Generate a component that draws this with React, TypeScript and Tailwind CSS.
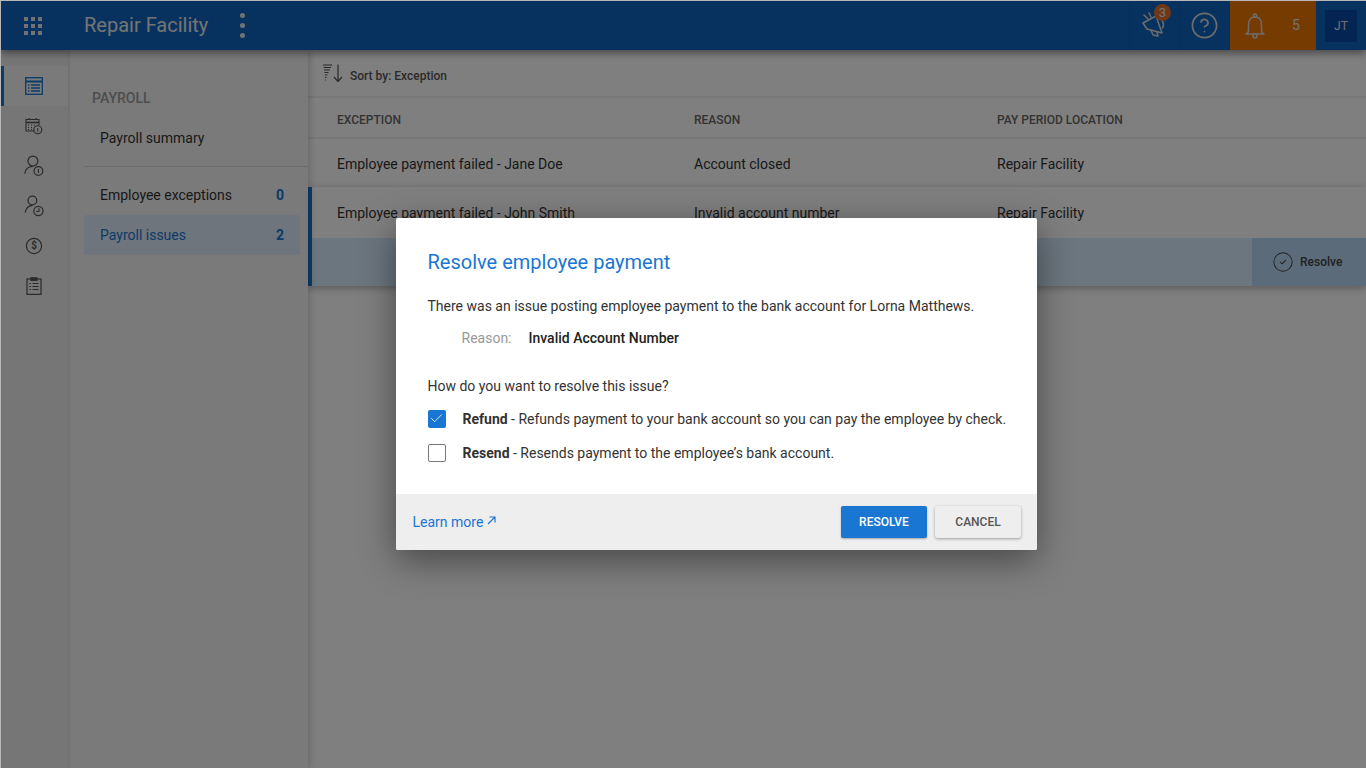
import { Check, CircleCheck, CircleHelp } from 'lucide-react'

const FONT = "font-['Roboto','Liberation_Sans',sans-serif]"

function AppsIcon() {
  const dots = [0, 1, 2, 3, 4, 5, 6, 7, 8]
  return (
    <div className="grid h-[18px] w-[18px] grid-cols-3 gap-[3px]">
      {dots.map((d) => (
        <span key={d} className="h-[4px] w-[4px] bg-[#e4e4e4]" />
      ))}
    </div>
  )
}

function Megaphone() {
  return (
    <svg className="mb-[4px]" width="26" height="28" viewBox="0 0 26 28" fill="none" stroke="#d8d8d8" strokeWidth="1.5" strokeLinejoin="round" strokeLinecap="round">
      <path d="M1 13 L14 6 L20 23 L5 19 Z" />
      <path d="M9 20 L11 25 L16 26 L15 22" />
      <path d="M16 7 C20 8 23 14 20.5 18" />
      <path d="M2 5 L6 9" />
      <path d="M7 3 L9 7" />
    </svg>
  )
}

function BellIcon() {
  return (
    <svg width="20" height="26" viewBox="0 0 20 26" fill="none" stroke="#d8d8d8" strokeWidth="1.5" strokeLinejoin="round">
      <path d="M10 4 C5 4 3.5 8 3.5 12 V17 C3.5 19 2.5 20.5 1 21 H19 C17.5 20.5 16.5 19 16.5 17 V12 C16.5 8 15 4 10 4 Z" />
      <circle cx="10" cy="2.6" r="1.6" />
      <circle cx="10" cy="23" r="2" />
    </svg>
  )
}

function IconList() {
  return (
    <svg width="18" height="18" viewBox="0 0 18 18" fill="none" stroke="#1976d2" strokeWidth="1.3">
      <rect x="0.7" y="0.7" width="16.6" height="16.6" />
      <path d="M0.7 4.5 H17.3" strokeWidth="2" />
      <path d="M3 8 H4.5 M6 8 H15 M3 11 H4.5 M6 11 H15 M3 14 H4.5 M6 14 H15" />
    </svg>
  )
}

function IconCalendarMoney() {
  return (
    <svg width="18" height="18" viewBox="0 0 18 18" fill="none" stroke="#555" strokeWidth="1.1">
      <path d="M9 14 H1 V2.5 H14 V8" />
      <path d="M1 5.5 H14" strokeWidth="1.6" />
      <path d="M4 1 V3 M11 1 V3" />
      <path d="M3 8 H4 M6 8 H7 M9 8 H10 M3 10.5 H4 M6 10.5 H7 M3 12.5 H4 M6 12.5 H7" />
      <circle cx="12.8" cy="12.8" r="4" />
      <path d="M12.8 11 V14.6" strokeWidth="1" />
    </svg>
  )
}

function IconPersonMoney() {
  return (
    <svg width="20" height="22" viewBox="0 0 18 20" fill="none" stroke="#555" strokeWidth="1.1">
      <circle cx="8" cy="5.5" r="4.5" />
      <path d="M0.7 17 C1 13 3.5 10.5 8 10.3" />
      <circle cx="13" cy="14.5" r="4" />
      <path d="M13 12.7 V16.3" strokeWidth="1" />
    </svg>
  )
}

function IconPersonClock() {
  return (
    <svg width="20" height="22" viewBox="0 0 18 20" fill="none" stroke="#555" strokeWidth="1.1">
      <circle cx="7.5" cy="5" r="4" />
      <path d="M1 16 C1.5 12.5 3.5 10 7.5 9.5" />
      <circle cx="13" cy="14.5" r="4.2" />
      <path d="M13.5 12 V15 H11" strokeWidth="1" />
    </svg>
  )
}

function IconDollar() {
  return (
    <svg width="18" height="18" viewBox="0 0 18 18" fill="none">
      <circle cx="9" cy="9" r="7.6" stroke="#555" strokeWidth="1.2" />
      <text x="9" y="12.4" textAnchor="middle" fontSize="10" fontWeight="700" fill="#555" fontFamily="Roboto">$</text>
    </svg>
  )
}

function IconClipboard() {
  return (
    <svg width="16" height="18" viewBox="0 0 16 18" fill="none" stroke="#555" strokeWidth="1.2">
      <rect x="1" y="2" width="14" height="15.4" />
      <rect x="5" y="0.8" width="6" height="2.5" fill="#555" />
      <path d="M3.5 6.5 H5 M6.5 6.5 H12.5 M3.5 9.5 H5 M6.5 9.5 H12.5 M3.5 12.5 H5 M6.5 12.5 H12.5" />
    </svg>
  )
}

function SortIcon() {
  return (
    <svg className="mb-[6px]" width="20" height="18" viewBox="0 0 20 18" fill="none" stroke="#555" strokeWidth="1.2">
      <path d="M0 1 H9 M0.7 3.5 H8 M1 6 H7 M1.5 8.5 H5.5 M1.8 11 H4.5 M2 13.5 H3.5 M2.2 16 H3" />
      <path d="M15 0.5 V17 M11 13 L15 17.5 L19 13" />
    </svg>
  )
}

const sideIcons = [
  <IconCalendarMoney key="a" />,
  <IconPersonMoney key="b" />,
  <IconPersonClock key="c" />,
  <IconDollar key="d" />,
  <IconClipboard key="e" />,
]

const columns = 'grid grid-cols-[357px_303px_1fr] pl-[29px]'

export default function App() {
  return (
    <div className={`${FONT} relative h-[768px] w-[1366px] overflow-hidden border-l border-t border-[#b8b8b8] bg-white text-[14px] text-[#333]`}>
      {/* Header */}
      <header className="relative z-20 flex h-[49px] items-center bg-[#0e64be] text-white shadow-[0_3px_8px_rgba(0,0,0,0.45)]">
        <div className="ml-[23px]">
          <AppsIcon />
        </div>
        <span className="mb-[2px] ml-[42px] text-[20px] text-[#e8e8e8]">Repair Facility</span>
        <div className="ml-[32px] flex flex-col gap-[5px]">
          <span className="h-[5px] w-[5px] rounded-full bg-[#e4e4e4]" />
          <span className="h-[5px] w-[5px] rounded-full bg-[#e4e4e4]" />
          <span className="h-[5px] w-[5px] rounded-full bg-[#e4e4e4]" />
        </div>
        <div className="ml-auto flex h-full items-center">
          <div className="relative flex h-full w-[51px] items-center justify-center border-x border-[#0c5cb0]">
            <Megaphone />
            <span className="absolute left-[24px] top-[3px] flex h-[17px] w-[17px] items-center justify-center rounded-full bg-[#e0702c] text-[13px] leading-none text-[#e8e8e8]">3</span>
          </div>
          <div className="flex h-full w-[50px] items-center justify-center pr-[2px]">
            <CircleHelp size={29} strokeWidth={1.4} color="#dcdcdc" />
          </div>
          <div className="flex h-full w-[86px] items-center bg-[#ec7600] pl-[15px]">
            <BellIcon />
            <span className="ml-[27px] text-[14px] text-[#e4e4e4]">5</span>
          </div>
          <div className="flex h-full w-[50px] items-center justify-center">
            <div className="flex h-[32px] w-[32px] items-center justify-center bg-[#0848a8] text-[12px] text-[#e4e4e4]">JT</div>
          </div>
        </div>
      </header>

      <div className="flex h-[718px]">
        {/* Icon rail */}
        <aside className="relative z-10 flex w-[67px] shrink-0 flex-col bg-[#ececec] pt-[16px] shadow-[1px_0_2px_rgba(0,0,0,0.12)]">
          <div className="flex h-[40px] items-center justify-center border-l-[3px] border-[#1976d2] bg-[#f4f4f4] pr-[4px]">
            <IconList />
          </div>
          {sideIcons.map((icon, i) => (
            <div key={i} className="flex h-[40px] items-center justify-center pr-px">
              {icon}
            </div>
          ))}
        </aside>

        {/* Section nav */}
        <nav className="relative z-[5] w-[240px] shrink-0 bg-[#f5f5f5] pl-[16px] pr-[8px] pt-[39px] shadow-[3px_0_6px_rgba(0,0,0,0.15)]">
          <p className="pl-[8px] text-[14px] font-medium leading-[18px] text-[#9a9a9a]">PAYROLL</p>
          <div className="mt-[11px] flex h-[40px] items-center pl-[16px] text-[#333]">Payroll summary</div>
          <div className="mt-[8px] h-px w-[224px] bg-[#d8d8d8]" />
          <div className="mt-[8px] flex h-[40px] items-center justify-between pl-[16px] pr-[16px] text-[#333]">
            <span>Employee exceptions</span>
            <span className="font-bold text-[#1976d2]">0</span>
          </div>
          <div className="flex h-[40px] items-center justify-between rounded-[3px] bg-[#dceaf8] pl-[16px] pr-[16px] text-[#1976d2]">
            <span>Payroll issues</span>
            <span className="font-bold">2</span>
          </div>
        </nav>

        {/* Table */}
        <main className="min-w-0 flex-1 bg-white">
          <div className="flex h-[48px] items-center border-b-2 border-[#eeeeee] pl-[15px] pt-[6px]">
            <SortIcon />
            <span className="ml-[7px] text-[12px] font-medium text-[#555]">Sort by: Exception</span>
          </div>
          <div className={`${columns} h-[41px] items-center border-b-2 border-[#eeeeee] pt-[5px] text-[12px] font-medium text-[#666]`}>
            <span>EXCEPTION</span>
            <span>REASON</span>
            <span>PAY PERIOD LOCATION</span>
          </div>
          <div className={`${columns} h-[48px] items-center pt-[2px] text-[#333]`}>
            <span>Employee payment failed - Jane Doe</span>
            <span>Account closed</span>
            <span>Repair Facility</span>
          </div>
          <div className="border-l-4 border-[#1976d2] shadow-[0_2px_8px_rgba(0,0,0,0.3)]">
            <div className="grid h-[51px] grid-cols-[357px_303px_1fr] items-center pl-[25px] pt-[1px] text-[#333]">
              <span>Employee payment failed - John Smith</span>
              <span>Invalid account number</span>
              <span>Repair Facility</span>
            </div>
            <div className="flex h-[48px] justify-end bg-[#d8ecff]">
              <div className="flex w-[114px] items-center gap-[6px] bg-[#b6d6f4] pl-[20px] text-[12px] font-medium text-[#444]">
                <CircleCheck size={22} strokeWidth={1.1} />
                Resolve
              </div>
            </div>
          </div>
        </main>
      </div>

      {/* Dialog */}
      <div className="absolute inset-0 z-30 flex items-center justify-center bg-black/50 pb-[2px] pl-[65px]">
        <div className="h-[332px] w-[641px] overflow-hidden rounded-[2px] bg-white shadow-[0_10px_36px_rgba(0,0,0,0.45)]">
          <div className="h-[276px] pl-[32px] pr-[20px] pt-[31px]">
            <h2 className="text-[20px] leading-[26px] text-[#1976d2]">Resolve employee payment</h2>
            <p className="mt-[21px] leading-[20px] text-[#333]">There was an issue posting employee payment to the bank account for Lorna Matthews.</p>
            <div className="mt-[12px] flex leading-[20px]">
              <span className="ml-[34px] w-[66px] text-[#999]">Reason:</span>
              <span className="ml-px font-medium text-[#222]">Invalid Account Number</span>
            </div>
            <p className="mt-[28px] leading-[20px] text-[#333]">How do you want to resolve this issue?</p>
            <div className="mt-[13px] flex h-[20px] items-center">
              <span className="flex h-[18px] w-[18px] items-center justify-center rounded-[2px] bg-[#1976d2]">
                <Check size={15} strokeWidth={1.3} color="white" />
              </span>
              <span className="ml-[17px] mt-[2px] text-[#333]"><b className="font-bold">Refund</b> - Refunds payment to your bank account so you can pay the employee by check.</span>
            </div>
            <div className="mt-[14px] flex h-[20px] items-center">
              <span className="h-[18px] w-[18px] rounded-[2px] border border-[#777] bg-white" />
              <span className="ml-[17px] mt-[2px] text-[#333]"><b className="font-bold">Resend</b> - Resends payment to the employee’s bank account.</span>
            </div>
          </div>
          <div className="flex h-[56px] items-center bg-[#eeeeee] pl-[17px] pr-[16px]">
            <span className="mt-[1px] text-[#1976d2]">Learn more</span>
            <svg className="mb-[3px] ml-[4px]" width="9" height="9" viewBox="0 0 9 9" fill="none" stroke="#1976d2" strokeWidth="1.2">
              <path d="M1 8 L8 1 M2.5 1 H8 V6.5" />
            </svg>
            <button className="ml-auto h-[32px] w-[86px] rounded-[2px] bg-[#1976d2] pl-[1px] text-[12px] font-medium text-white shadow-[0_1px_2px_rgba(0,0,0,0.3)]">RESOLVE</button>
            <button className="ml-[8px] h-[32px] w-[86px] rounded-[3px] bg-[#eeeeee] pl-[1px] text-[12px] font-medium text-[#555] shadow-[0_1px_3px_rgba(0,0,0,0.35)]">CANCEL</button>
          </div>
        </div>
      </div>
    </div>
  )
}
